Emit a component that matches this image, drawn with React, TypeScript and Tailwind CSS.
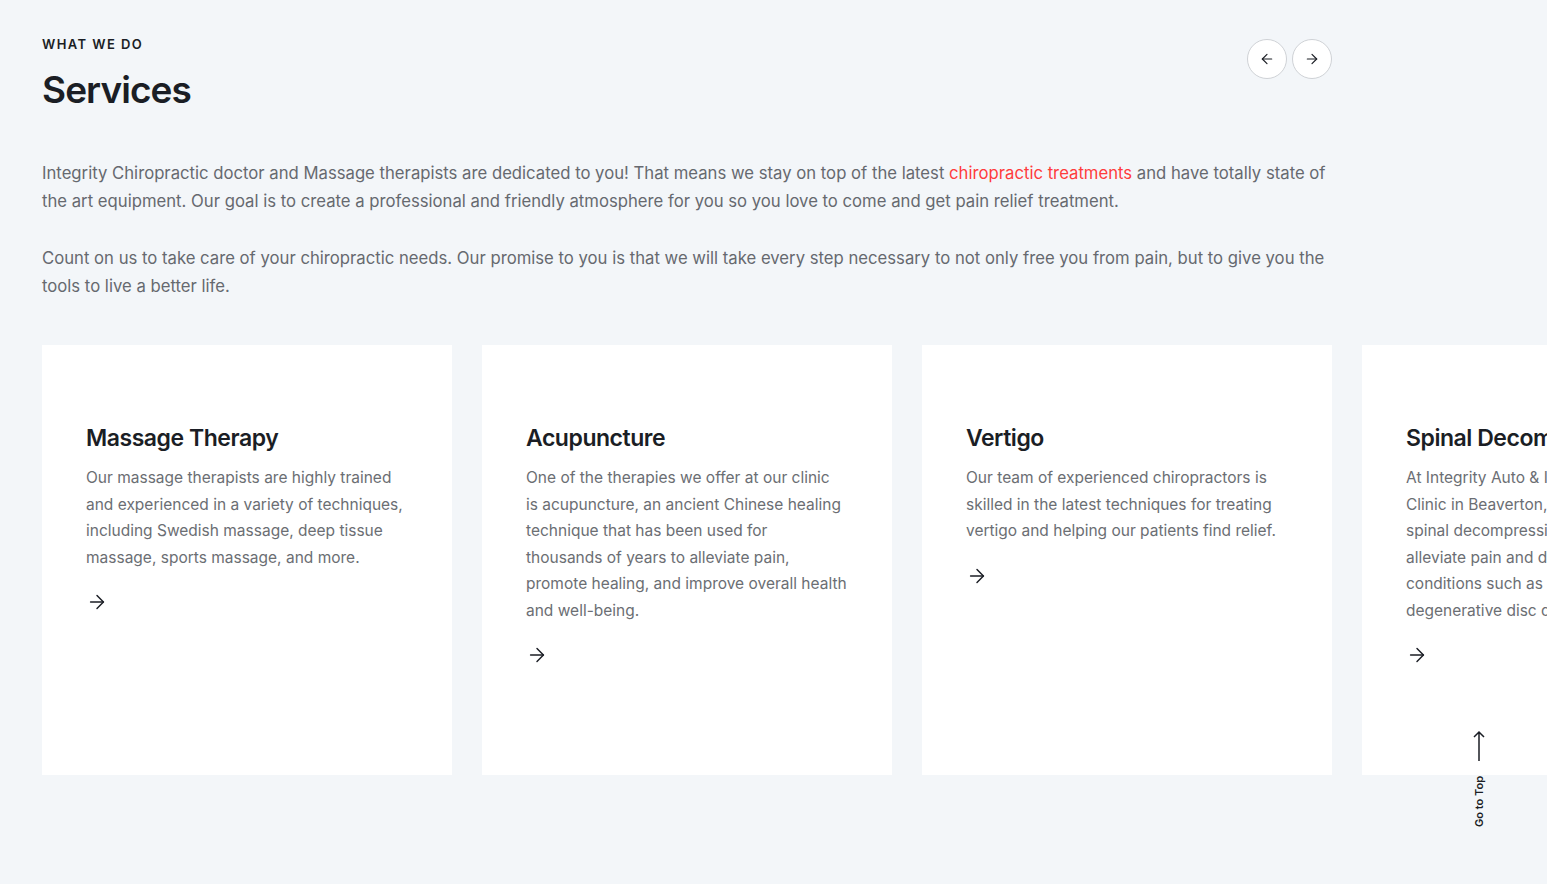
import { ArrowLeft, ArrowRight } from 'lucide-react'

const services = [
  {
    title: 'Massage Therapy',
    text: 'Our massage therapists are highly trained and experienced in a variety of techniques, including Swedish massage, deep tissue massage, sports massage, and more.',
  },
  {
    title: 'Acupuncture',
    text: 'One of the therapies we offer at our clinic\nis acupuncture, an ancient Chinese healing technique that has been used for thousands of years to alleviate pain, promote healing, and improve overall health and well-being.',
  },
  {
    title: 'Vertigo',
    text: 'Our team of experienced chiropractors is skilled in the latest techniques for treating vertigo and helping our patients find relief.',
  },
  {
    title: 'Spinal Decompression',
    text: 'At Integrity Auto & Injury Chiropractic\nClinic in Beaverton, we offer\nspinal decompression therapy to\nalleviate pain and discomfort caused by\nconditions such as herniated discs and\ndegenerative disc disease.',
  },
]

export default function App() {
  return (
    <div className="relative min-h-[884px] overflow-hidden bg-[#f3f6f9] font-['Inter',sans-serif] text-[#1b1e25]">
      <div className="px-[42px] pt-[36px]">
        {/* header */}
        <div className="flex w-[1290px] items-start justify-between">
          <div>
            <p className="text-[13px] font-semibold uppercase leading-[16px] tracking-[0.11em]">What we do</p>
            <h2 className="mt-[14px] text-[37px] font-semibold leading-[48px] tracking-[-0.025em]">Services</h2>
          </div>
          <div className="mt-[3px] flex gap-[5px]">
            <button className="flex h-[40px] w-[40px] items-center justify-center rounded-full border border-[#cfd2d6] bg-white">
              <ArrowLeft size={16} strokeWidth={1.75} />
            </button>
            <button className="flex h-[40px] w-[40px] items-center justify-center rounded-full border border-[#cfd2d6] bg-white">
              <ArrowRight size={16} strokeWidth={1.75} />
            </button>
          </div>
        </div>

        {/* intro */}
        <div className="mt-[45px] w-[1290px] text-[16.7px] leading-[28px] text-[#66696f]">
          <p>
            Integrity Chiropractic doctor and Massage therapists are dedicated to you! That means we stay on top of the latest{' '}
            <a className="text-[#ff3c3c]">chiropractic treatments</a> and have totally state of the art equipment. Our goal is to create a professional and friendly atmosphere for you so you love to come and get pain relief treatment.
          </p>
          <p className="mt-[29px]">
            Count on us to take care of your chiropractic needs. Our promise to you is that we will take every step necessary to not only free you from pain, but to give you the tools to live a better life.
          </p>
        </div>

        {/* cards */}
        <div className="mt-[45px] flex gap-[30px]">
          {services.map(s => (
            <div key={s.title} className="h-[430px] w-[410px] shrink-0 bg-white px-[44px] pt-[78px]">
              <h3 className="whitespace-nowrap text-[23px] font-semibold leading-[30px] tracking-[-0.02em]">{s.title}</h3>
              <p className="mt-[12px] whitespace-pre-line text-[15.5px] leading-[26.5px] text-[#6b6e73]">{s.text}</p>
              <ArrowRight className="mt-[20px]" size={22} strokeWidth={1.6} />
            </div>
          ))}
        </div>
      </div>

      {/* go to top */}
      <div className="absolute left-[1468px] top-[730px] flex w-[22px] flex-col items-center">
        <svg width="12" height="32" viewBox="0 0 12 32" fill="none" stroke="#1b1e25" strokeWidth="1.5">
          <path d="M6 31V2M1 7l5-5 5 5" />
        </svg>
        <span className="mt-[14px] rotate-180 text-[11px] font-semibold leading-[12px] [writing-mode:vertical-rl]">Go to Top</span>
      </div>
    </div>
  )
}
